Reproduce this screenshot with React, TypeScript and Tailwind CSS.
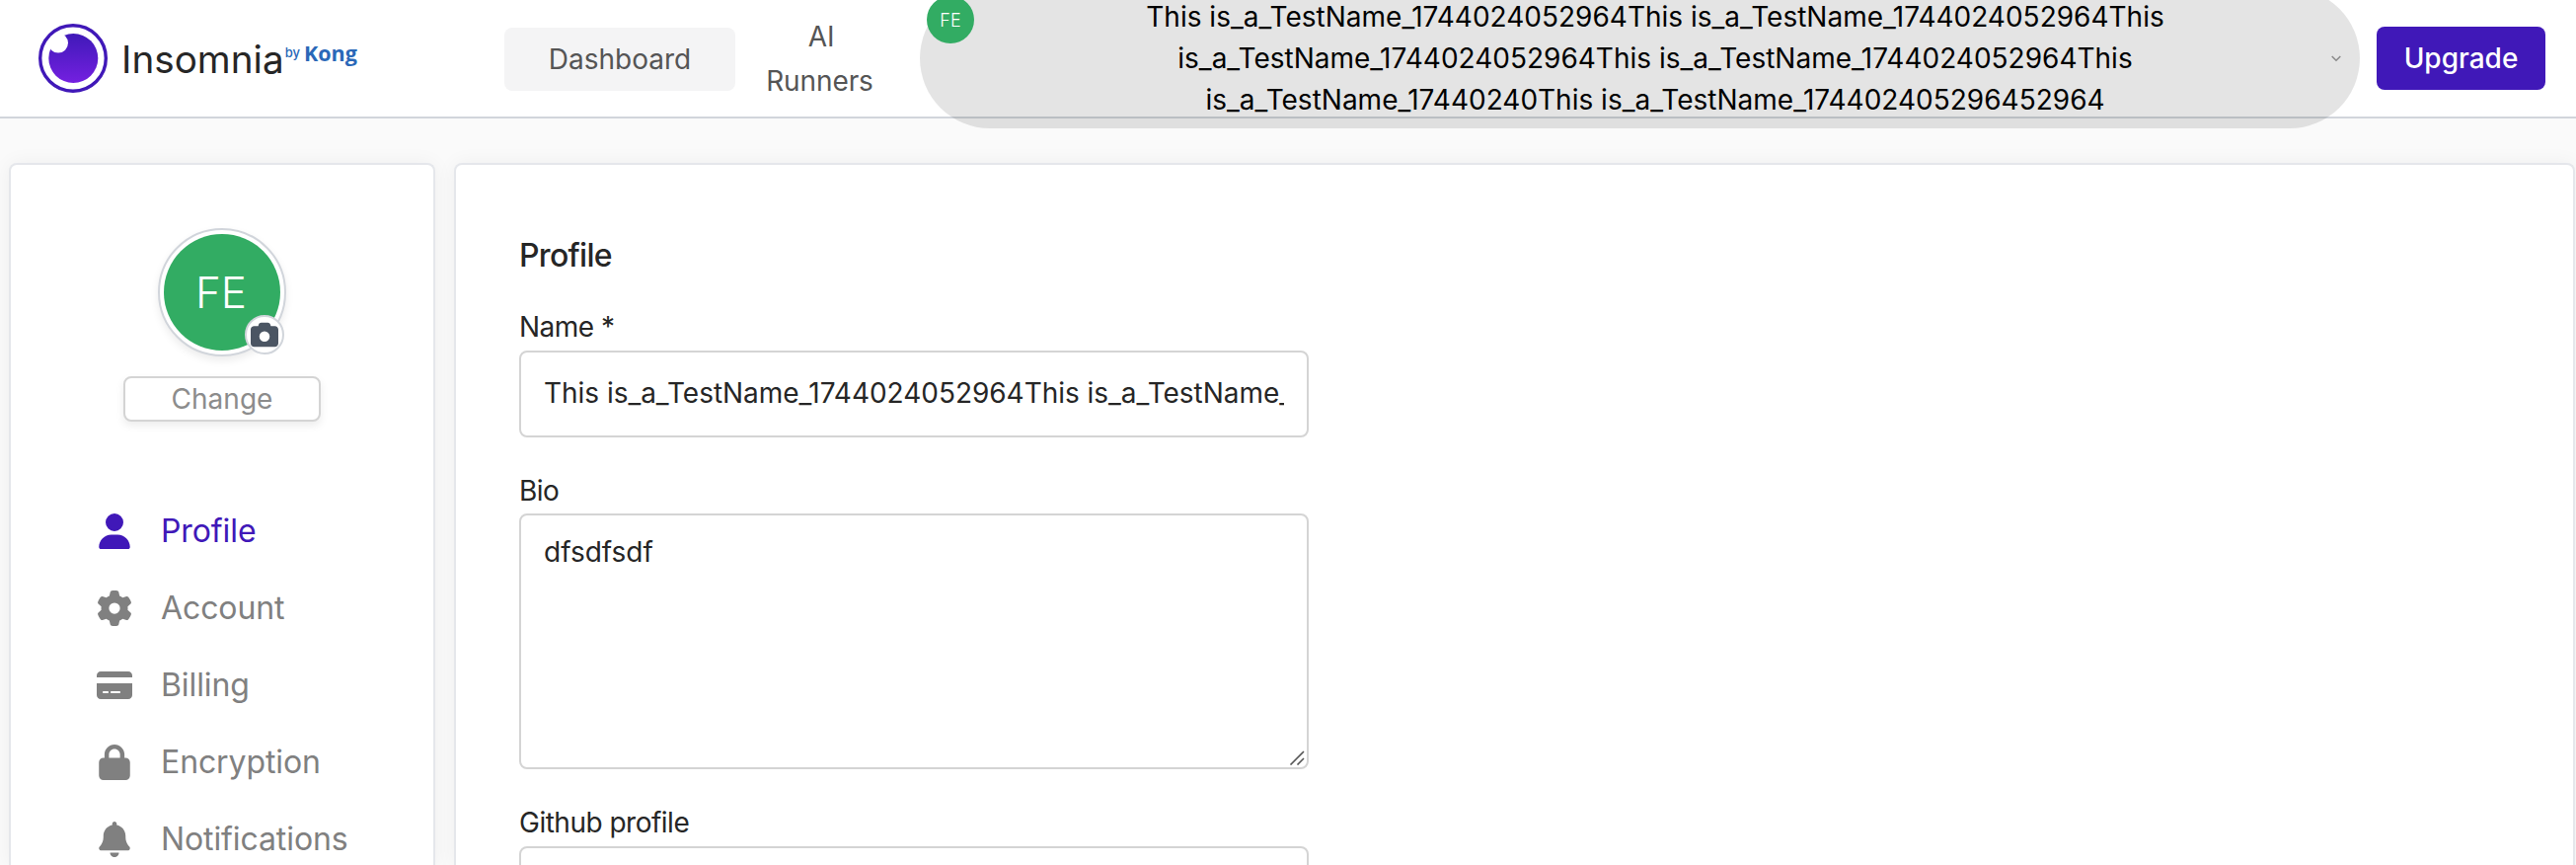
import { FaUser, FaGear, FaCreditCard, FaLock, FaBell, FaCamera } from "react-icons/fa6";
import type { IconType } from "react-icons";

const items: { label: string; icon: IconType; active?: boolean }[] = [
  { label: "Profile", icon: FaUser, active: true },
  { label: "Account", icon: FaGear },
  { label: "Billing", icon: FaCreditCard },
  { label: "Encryption", icon: FaLock },
  { label: "Notifications", icon: FaBell },
];

function Logo() {
  return (
    <div className="flex w-[472px] shrink-0 items-center">
      <svg width="70" height="70" viewBox="0 0 70 70" className="shrink-0">
        <defs>
          <linearGradient id="moon" x1="0" y1="0" x2="0" y2="1">
            <stop offset="0" stopColor="#3f19b8" />
            <stop offset="1" stopColor="#7420e0" />
          </linearGradient>
        </defs>
        <circle cx="35" cy="35" r="33.3" fill="#fff" stroke="#4018b8" strokeWidth="3.4" />
        <circle cx="35.3" cy="35" r="25" fill="url(#moon)" />
        <circle cx="20" cy="19.6" r="10" fill="#fff" />
      </svg>
      <span className="mt-0.5 ml-[14px] text-[38.7px] leading-[60px] text-[#262626]">Insomnia</span>
      <span className="mb-[13px] ml-px text-[13px] leading-5 font-medium text-[#2a68b8]">by</span>
      <span className="mb-[10px] ml-1 font-['Open_Sans'] text-[21.5px] leading-6 font-bold text-[#2a68b8]">Kong</span>
    </div>
  );
}

function Header() {
  return (
    <header className="flex h-[120px] items-center border-b-2 border-[#d1d5db] bg-white pl-[39px]">
      <Logo />
      <button className="mt-0.5 flex h-16 w-[234px] shrink-0 items-center justify-center rounded-lg bg-[#f4f4f5] text-[28px] text-[#555]">
        Dashboard
      </button>
      <div className="mt-px w-[176px] shrink-0 pr-[2px] text-center text-[28px] leading-[45px] tracking-[-0.1px] text-[#555]">
        AI
        <br />
        <span className="mr-[3px]">Runners</span>
      </div>
      <button className="mr-[17px] ml-[11px] flex h-[142px] w-[1459px] shrink-0 items-start rounded-full bg-black/[0.105] pt-2 pl-[7px] text-black">
        <span className="flex size-12 shrink-0 items-center justify-center rounded-full bg-[#32ac63] text-[18px] font-light text-white">FE</span>
        <span className="ml-[5px] flex-1 text-center text-[28px] leading-[42px]">
          This is_a_TestName_1744024052964This is_a_TestName_1744024052964This
          <br />
          is_a_TestName_1744024052964This is_a_TestName_1744024052964This
          <br />
          is_a_TestName_17440240This is_a_TestName_174402405296452964
        </span>
        <svg width="10" height="8" viewBox="0 0 10 8" className="mt-[60px] mr-[19px] shrink-0" fill="none" stroke="#8a8a8a" strokeWidth="1.5">
          <path d="M0.7 1 5 5.3 9.3 1" />
        </svg>
      </button>
      <button className="flex h-16 w-[171px] shrink-0 items-center justify-center rounded-lg bg-[#4018b8] text-[28px] font-medium text-white">
        Upgrade
      </button>
    </header>
  );
}

function Sidebar() {
  return (
    <aside className="flex w-[432px] shrink-0 flex-col items-center rounded-t-lg border-2 border-b-0 border-[#e5e7eb] bg-white pt-16 shadow-[0_0_20px_rgba(0,0,0,0.05)]">
      <div className="relative size-[130px] shrink-0 rounded-full border-2 border-[#d1d5db] bg-white p-1 shadow-[0_4px_8px_rgba(0,0,0,0.08)]">
        <div className="flex size-full items-center justify-center rounded-full bg-[#32ac63] pr-0.5 pb-px text-[44px] font-[350] text-white">FE</div>
        <div className="absolute right-0 bottom-0 flex size-10 items-center justify-center rounded-full border-2 border-[#d1d5db] bg-white">
          <FaCamera className="size-7 text-[#4b5563]" />
        </div>
      </div>
      <button className="mt-5 flex h-[46px] w-[200px] shrink-0 items-center justify-center rounded-lg border-2 border-[#d4d4d4] bg-white text-[28px] text-[#8c8c8c] shadow-[0_4px_8px_rgba(0,0,0,0.08)]">
        Change
      </button>
      <nav className="mt-[72px] flex w-full flex-col pl-[87px]">
        {items.map(({ label, icon: Icon, active }) => (
          <a key={label} className={`flex h-[78px] items-center text-[32px] tracking-[-0.1px] ${active ? "text-[#4018b8]" : "text-[#808080]"}`}>
            <Icon className="mr-[29px] size-9 shrink-0" />
            {label}
          </a>
        ))}
      </nav>
    </aside>
  );
}

const longName = "This is_a_TestName_1744024052964This is_a_TestName_1744024052964This is_a_TestName_17440240";
const field = "block w-full rounded-lg border-2 border-[#d4d4d4] bg-white px-[23px] text-[28px] text-[#262626] outline-none";
const labelText = "block text-[28px] leading-[42px] tracking-[-0.5px]";

function ProfileForm() {
  return (
    <main className="min-w-0 flex-1 rounded-t-lg border-2 border-b-0 border-[#e5e7eb] bg-white pt-[68px] pl-16 text-[#262626] shadow-[0_0_20px_rgba(0,0,0,0.05)]">
      <div className="w-[800px]">
        <h1 className="text-[32px] leading-[48px] font-medium tracking-[-0.7px]">Profile</h1>
        <label className={`mt-[27px] ${labelText}`}>Name *</label>
        <input readOnly value={longName} className={`mt-[3px] h-[88px] pb-0.5 tracking-[-0.03px] ${field}`} />
        <label className={`mt-[33px] ${labelText}`}>Bio</label>
        <div className="relative mt-[2px]">
          <textarea readOnly value="dfsdfsdf" className={`h-[259px] resize-none pt-4 leading-[42px] ${field}`} />
          <svg width="16" height="16" viewBox="0 0 16 16" className="absolute right-1 bottom-1" stroke="#555" strokeWidth="1.6">
            <path d="M1.5 15.5 15 2M8.5 15.5 15 9" />
          </svg>
        </div>
        <label className={`mt-[33px] ${labelText}`}>Github profile</label>
        <input readOnly value="" className={`mt-[3px] h-[88px] ${field}`} />
      </div>
    </main>
  );
}

export default function App() {
  return (
    <div className="flex h-[876px] w-[2610px] flex-col overflow-hidden bg-[#fafafa] font-['Inter',sans-serif]">
      <div className="relative z-10">
        <Header />
      </div>
      <div className="mt-[45px] flex min-h-0 flex-1 gap-[19px] pr-px pl-[9px]">
        <Sidebar />
        <ProfileForm />
      </div>
    </div>
  );
}
